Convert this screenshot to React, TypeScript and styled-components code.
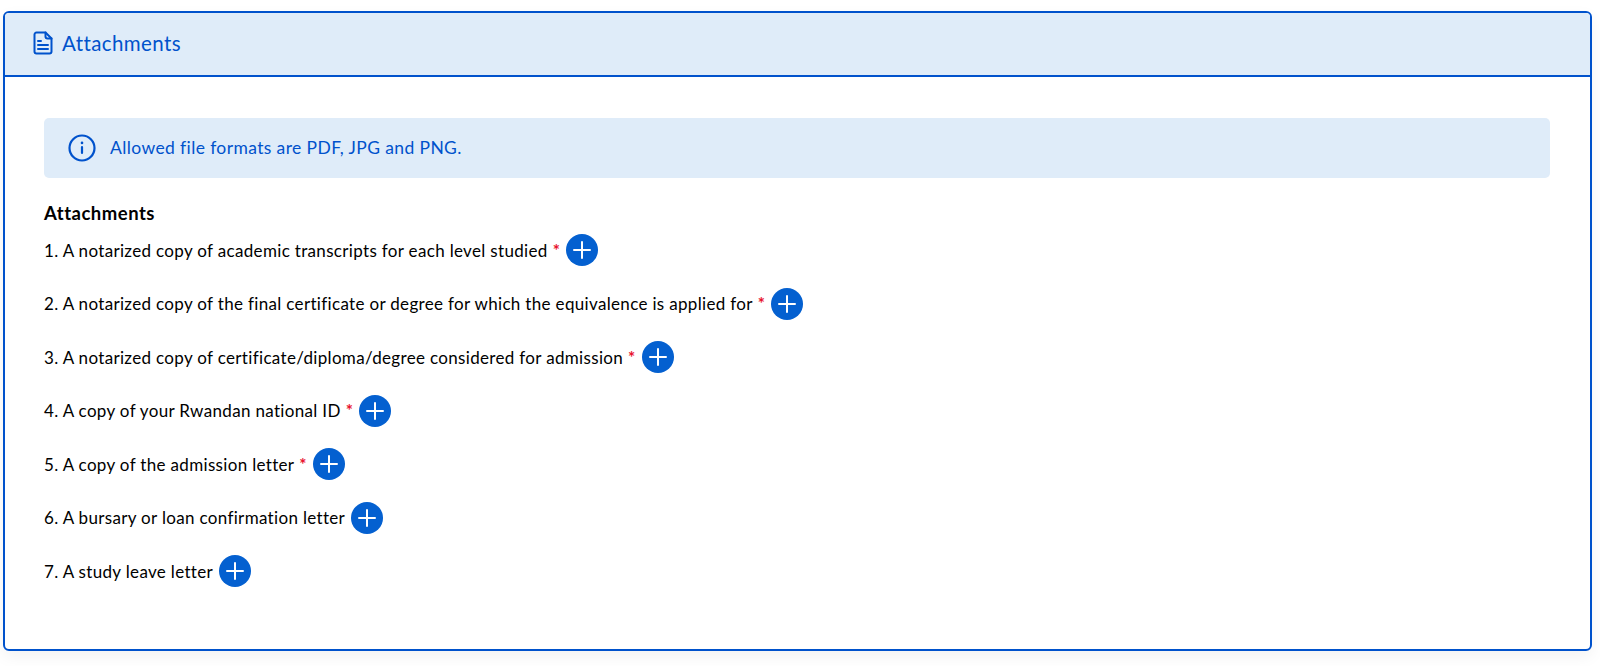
import React from 'react';
import styled, { createGlobalStyle } from 'styled-components';

const GlobalStyle = createGlobalStyle`
  html, body {
    margin: 0;
    padding: 0;
    background: #ffffff;
    font-family: 'Lato', 'Noto Sans', sans-serif;
  }
`;

const Page = styled.div`
  padding: 11px 8px 16px 3px;
`;

const Card = styled.section`
  border: 2px solid #0052cc;
  border-radius: 6px;
  box-shadow: 0 6px 16px rgba(0, 0, 0, 0.05);
  height: 640px;
  box-sizing: border-box;
  overflow: hidden;
`;

const CardHeader = styled.header`
  display: flex;
  align-items: center;
  gap: 8px;
  height: 64px;
  box-sizing: border-box;
  padding: 0 0 3px 28px;
  background: #dfecf9;
  border-bottom: 2px solid #0052cc;
  color: #0052cc;
  font-size: 20.5px;
  letter-spacing: 0.4px;
`;

const HeaderTitle = styled.span`
  margin-left: 1px;
`;

const CardBody = styled.div`
  padding: 41px 40px 0 39px;
`;

const InfoBox = styled.div`
  display: flex;
  align-items: center;
  gap: 14px;
  height: 60px;
  padding-left: 24px;
  background: #dfecf9;
  border-radius: 5px;
  color: #0052cc;
  font-size: 17.5px;
  letter-spacing: 0.38px;
`;

const InfoText = styled.span`
  margin-bottom: 2px;
`;

const SectionTitle = styled.div`
  margin-top: 23px;
  font-size: 18.5px;
  font-weight: 700;
  line-height: 24px;
  letter-spacing: 0.5px;
  color: #000000;
`;

const List = styled.div`
  display: flex;
  flex-direction: column;
  gap: 21.5px;
  margin-top: 9px;
`;

const Row = styled.div`
  display: flex;
  align-items: center;
  height: 32px;
  font-size: 17px;
  letter-spacing: 0.33px;
  color: #000000;
`;

const Required = styled.span`
  margin-left: 5px;
  color: #e8112d;
  font-weight: 700;
`;

const AddButton = styled.button`
  display: flex;
  align-items: center;
  justify-content: center;
  width: 32px;
  height: 32px;
  margin-left: 6px;
  padding: 0;
  border: none;
  border-radius: 50%;
  background: #0460d0;
  cursor: pointer;
`;

const FileIcon = () => (
  <svg width="20" height="24" viewBox="0 0 20 24" fill="none" stroke="#0052cc" strokeWidth="2" strokeLinejoin="round" strokeLinecap="round">
    <path d="M3.5 1.5h9l6 6v13a2 2 0 0 1-2 2h-13a2 2 0 0 1-2-2v-17a2 2 0 0 1 2-2z" />
    <path d="M12.5 1.5v4a2 2 0 0 0 2 2h4" />
    <path d="M5 10h3M5 14h10M5 18h10" />
  </svg>
);

const InfoIcon = () => (
  <svg width="28" height="28" viewBox="0 0 28 28" fill="none" stroke="#0052cc" strokeWidth="2.2" strokeLinecap="round">
    <circle cx="14" cy="14" r="12.5" />
    <path d="M14 13v6" />
    <path d="M14 8.7v.2" strokeWidth="2.6" />
  </svg>
);

const PlusIcon = () => (
  <svg width="18" height="18" viewBox="0 0 18 18" fill="none" stroke="#ffffff" strokeWidth="2" strokeLinecap="round">
    <path d="M9 1v16M1 9h16" />
  </svg>
);

const attachments = [
  { label: '1. A notarized copy of academic transcripts for each level studied', required: true },
  { label: '2. A notarized copy of the final certificate or degree for which the equivalence is applied for', required: true },
  { label: '3. A notarized copy of certificate/diploma/degree considered for admission', required: true },
  { label: '4. A copy of your Rwandan national ID', required: true },
  { label: '5. A copy of the admission letter', required: true },
  { label: '6. A bursary or loan confirmation letter', required: false },
  { label: '7. A study leave letter', required: false },
];

export default function App() {
  return (
    <Page>
      <GlobalStyle />
      <Card>
        <CardHeader>
          <FileIcon />
          <HeaderTitle>Attachments</HeaderTitle>
        </CardHeader>
        <CardBody>
          <InfoBox>
            <InfoIcon />
            <InfoText>Allowed file formats are PDF, JPG and PNG.</InfoText>
          </InfoBox>
          <SectionTitle>Attachments</SectionTitle>
          <List>
            {attachments.map(item => (
              <Row key={item.label}>
                <span>{item.label}</span>
                {item.required && <Required>*</Required>}
                <AddButton aria-label="Add file">
                  <PlusIcon />
                </AddButton>
              </Row>
            ))}
          </List>
        </CardBody>
      </Card>
    </Page>
  );
}
